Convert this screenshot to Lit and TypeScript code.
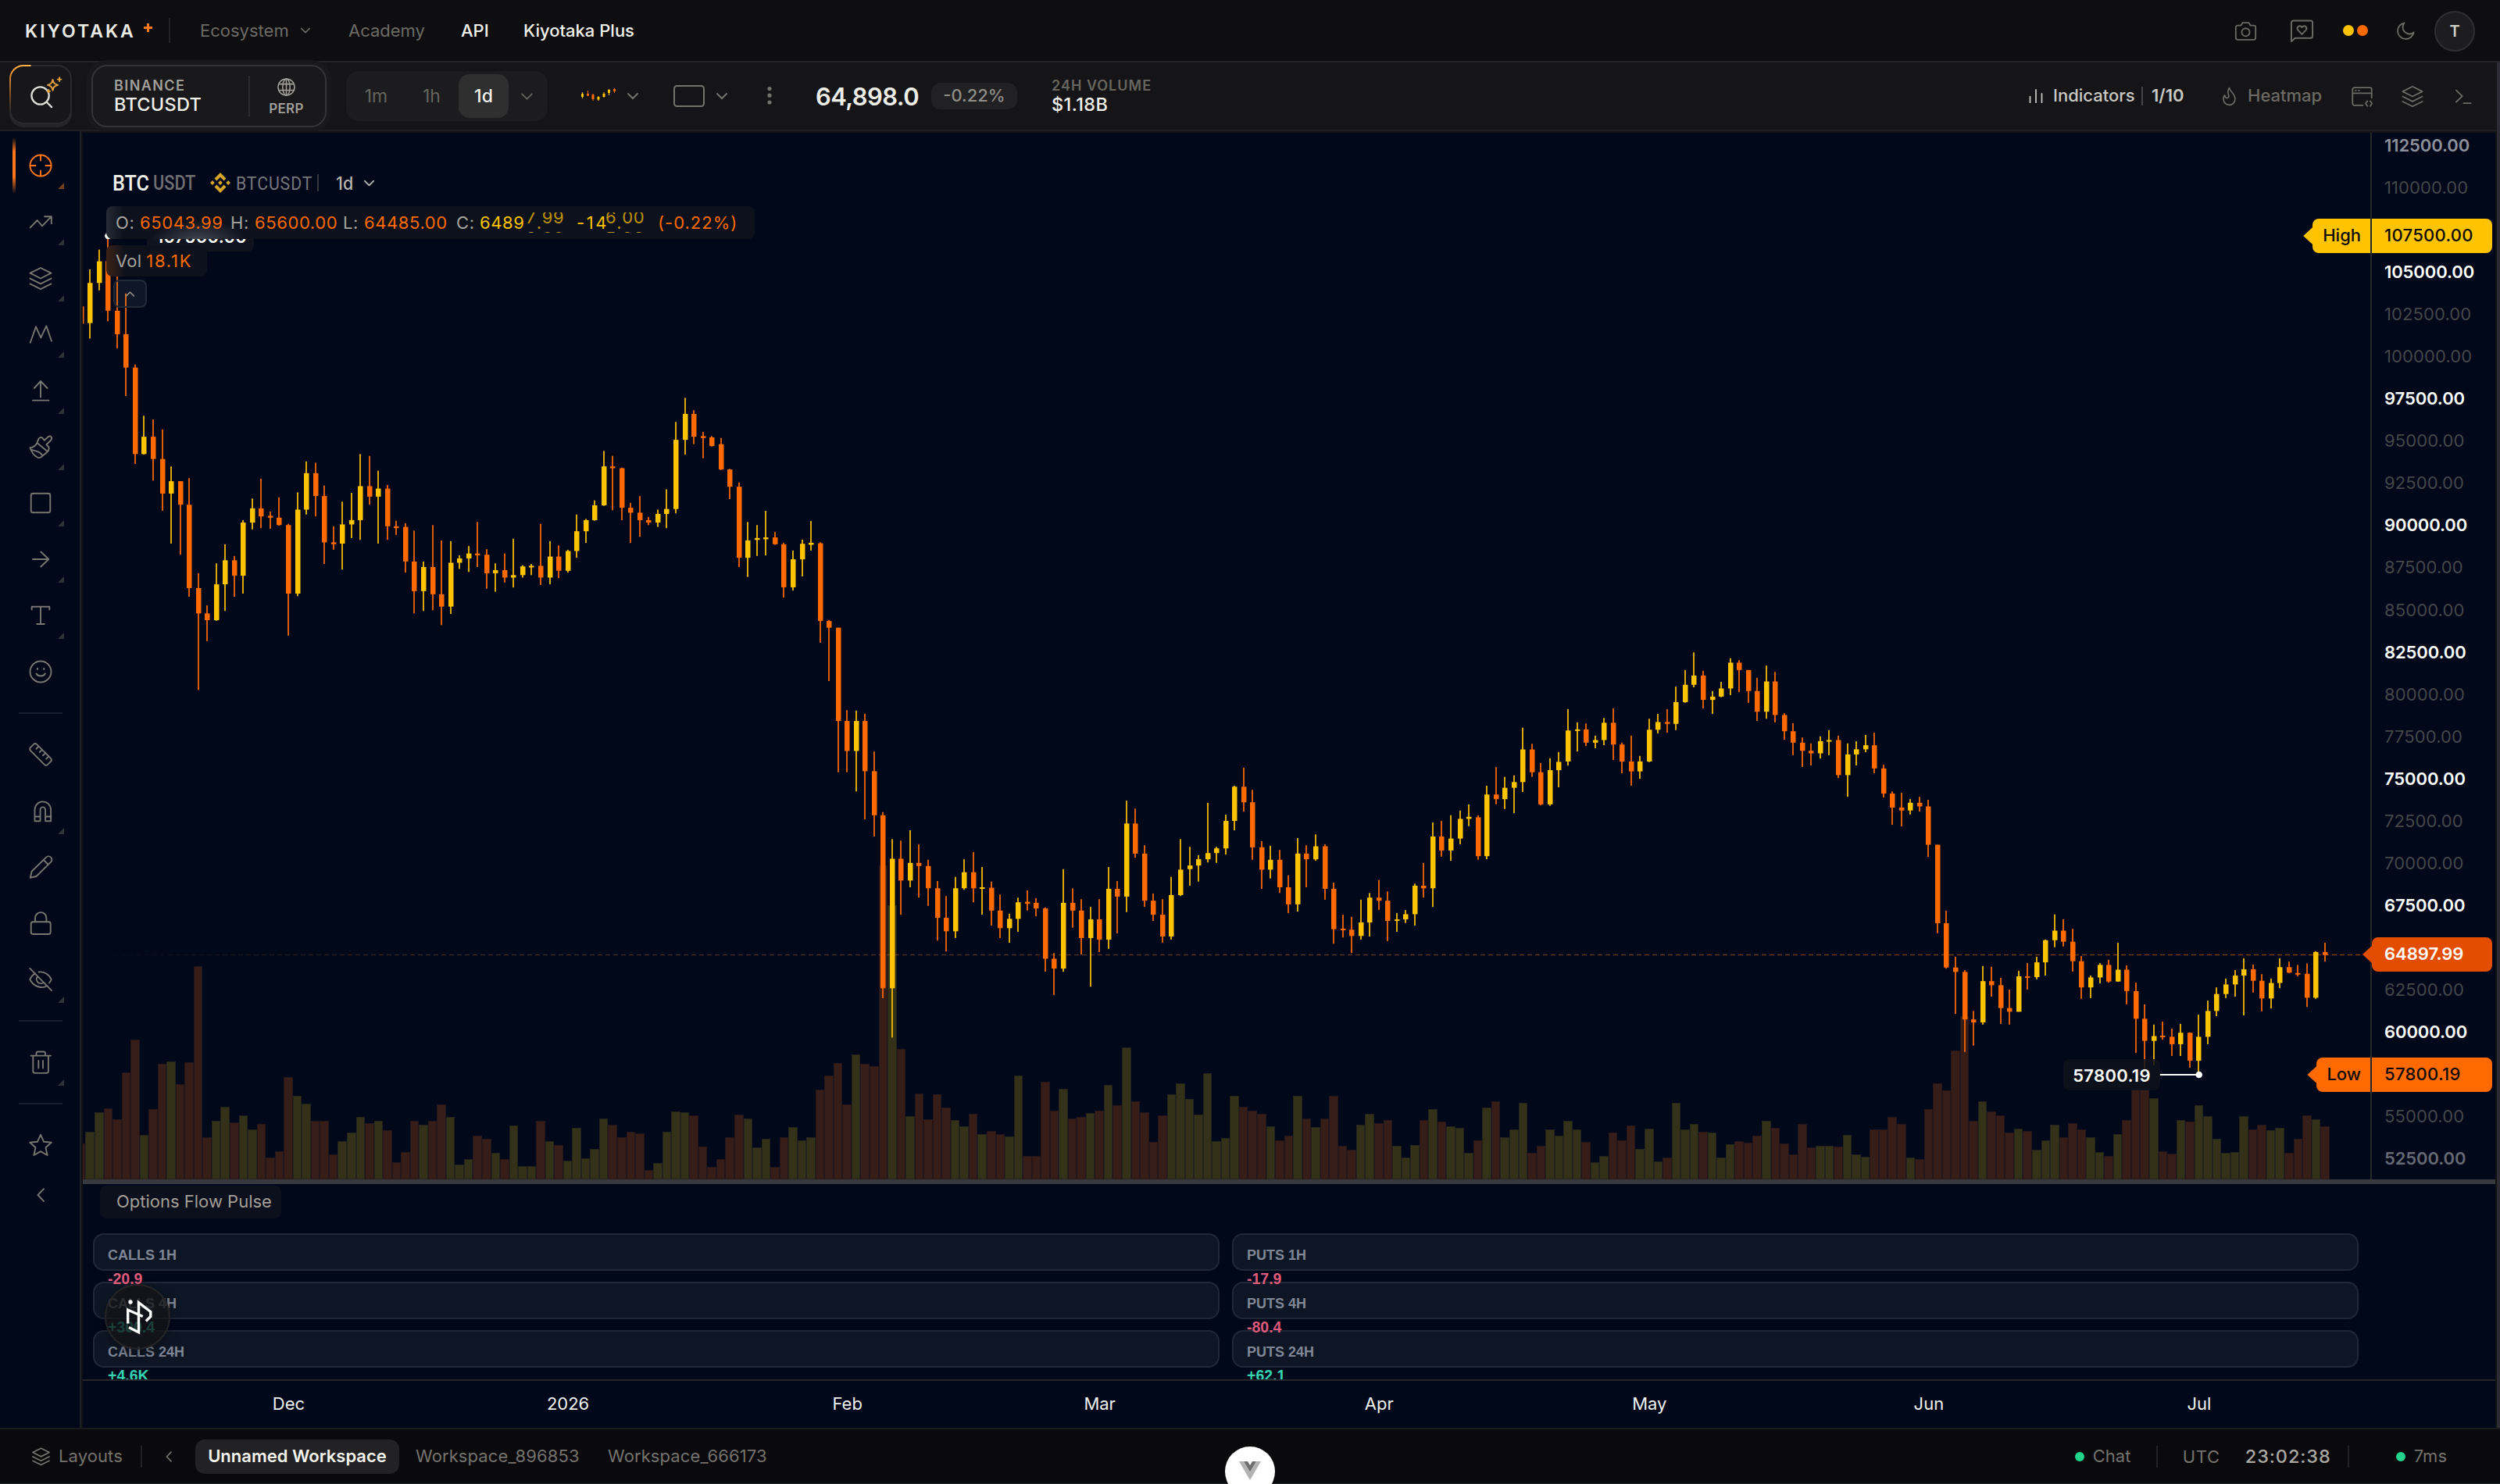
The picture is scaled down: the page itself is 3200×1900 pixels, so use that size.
import { LitElement, html, svg, css, nothing } from "lit";
import { customElement, property } from "lit/decorators.js";

/* ------------------------------------------------------------------ */
/* Icons                                                               */
/* ------------------------------------------------------------------ */

const ICONS: Record<string, unknown> = {
  crosshair: svg`<circle cx="16" cy="16" r="13.5"/><path d="M16 2.5v7M16 29.5v-7M2.5 16h7M29.5 16h-7"/>`,
  trend: svg`<path d="M2.7 23.3 11.7 14 18 21.3 29.5 9.4M21 9.2h8.8v9"/>`,
  layers: svg`<path d="M16 3 29.5 9.7 16 16.5 2.5 9.7ZM2.5 16.6 16 23.3l13.5-6.7M2.5 23.4 16 30.1l13.5-6.7"/>`,
  zigzag: svg`<path d="M2.7 26.7 10 6.3l6.3 14.1 7-15.1L30 24.7"/>`,
  up: svg`<path d="M16 4v20.5M7.8 13 16 4l8.5 9M6 28.6h20.5"/>`,
  brush: svg`<path d="M2.5 17.2c4.500-.3 7.200-2.600 9-6.200L25 22.300 16.800 29c-2 1.600-3.800 1.300-5.400.3C7.200 26.600 4.200 22.500 2.500 17.200ZM11.500 11l1.700-4.600c.9-2.500 3.600-3.300 5.400-1.300l2.200 2.700 4.500-4.200c3.600-2.600 6.500.8 3.700 4.200l-5.600 5.500 2.400 2.300c1.800 1.900 1.300 3.600-.8 6.700M4 19.700c5 2.300 11 1 14.500 7.800"/>`,
  square: svg`<rect x="3.700" y="3.700" width="24.600" height="24.600" rx="2.500"/>`,
  arrow: svg`<path d="M6 16h20M16.300 6.500 26.300 16l-10 9.500"/>`,
  text: svg`<path d="M4.700 8.500V4.800h22.600v3.700M16 4.800v22.200M11.200 27h9.600"/>`,
  smile: svg`<circle cx="16" cy="16" r="13.500"/><path d="M12 11.800v1.200M20.300 11.800v1.200M10.500 18.500c2 4 9.300 4 11.300 0"/>`,
  ruler: svg`<g transform="rotate(45 16 16)"><rect x="0.500" y="10.300" width="31" height="11.400" rx="3"/><path d="M7 10.300v4.500M13 10.300v4.500M19 10.300v4.500M25 10.300v4.500"/></g>`,
  magnet: svg`<path d="M8.500 29.200V14.700a10.300 10.300 0 0 1 20.600 0v14.500h-7V14.700a3.300 3.300 0 0 0-6.600 0v14.500ZM8.500 23.500h7M22.100 23.500h7"/>`,
  pencil: svg`<path d="m2.800 29.800 1.800-8L23 3.600a4.300 4.300 0 0 1 6.100 6.100L10.500 28ZM19.800 7l6 6"/>`,
  lock: svg`<rect x="3.700" y="14.300" width="25" height="15.700" rx="2.500"/><path d="M9 14.300V9.300a7.200 7.200 0 0 1 14.400 0v5"/>`,
  eyeOff: svg`<path d="M2.300 1.900 30 30.100M9 8C6 10 3.500 13 2.300 16 7 25.500 18 28.500 24.300 24M13.500 6.500C20.500 5.600 27 9.500 29.700 16c-.6 1.700-1.500 3.200-2.600 4.400M12 12.300a5.400 5.400 0 0 0 7.600 7.600"/>`,
  trash: svg`<path d="M3.500 7.600H29M10.500 7.600V4.800a2.300 2.300 0 0 1 2.300-2.300h6.900A2.300 2.300 0 0 1 22 4.800v2.800M6.300 7.600v20a2.300 2.300 0 0 0 2.300 2.300h15a2.300 2.300 0 0 0 2.300-2.300v-20M13.300 14v9.600M19 14v9.600"/>`,
  star: svg`<path d="m16 2.800 4.100 9 9.600 1-7.200 6.500 2.100 9.700L16 24.100 7.400 29l2.100-9.700-7.200-6.500 9.600-1Z"/>`,
  chevLeft: svg`<path d="M20 8.200 12.500 16l7.500 7.800"/>`,
  chevDown: svg`<path d="m4 10 12 12 12-12"/>`,
  chevUp: svg`<path d="m4 22 12-12 12 12"/>`,
  search: svg`<circle cx="14" cy="14" r="11.500"/><path d="m22.500 22.500 6.500 6.500"/>`,
  sparkle: svg`<path d="M13 6c1.600 7 3 8.500 10 10.500-7 2-8.400 3.500-10 10.500-1.600-7-3-8.500-10-10.500C10 14.500 11.400 13 13 6ZM26 2v7M22.500 5.500h7M5 26v5M2.500 28.500h5"/>`,
  globe: svg`<circle cx="16" cy="16" r="13.500"/><ellipse cx="16" cy="16" rx="6" ry="13.500"/><path d="M3.500 11h25M3.500 21h25M16 2.500v27"/>`,
  camera: svg`<path d="M4.500 8.500h4.700l2.500-4h8.600l2.500 4h4.700a2.500 2.500 0 0 1 2.500 2.500v15a2.500 2.500 0 0 1-2.500 2.500h-23A2.500 2.500 0 0 1 2 26V11a2.500 2.500 0 0 1 2.500-2.500Z"/><circle cx="16" cy="18" r="5.600"/>`,
  message: svg`<path d="M2 30V5a2.500 2.500 0 0 1 2.500-2.500h23A2.500 2.500 0 0 1 30 5v18a2.500 2.500 0 0 1-2.500 2.500H7Z"/><path d="m16 20.500-5.200-5.400c-2.300-2.800.3-6.400 3.300-5.300.9.300 1.500.9 1.900 1.600.4-.7 1-1.300 1.900-1.600 3-1.100 5.600 2.500 3.300 5.300Z"/>`,
  moon: svg`<path d="M13.500 3A13.300 13.300 0 1 0 29 18.500 11 11 0 0 1 13.500 3Z"/>`,
  bars: svg`<path d="M4 17v12M16 3v26M28 11v18"/>`,
  flame: svg`<path d="M16 2c1 6 9.500 9.500 9.500 18A9.700 9.700 0 0 1 16 30a9.700 9.700 0 0 1-9.700-9.700c0-3 1-5 2.200-6.300.6 3.200 1.700 4.500 3.500 4.500 3.500 0 3.700-3 2.500-6C13 8.500 14 5 16 2Z"/>`,
  panel: svg`<path d="M17 28.500H5A2.500 2.500 0 0 1 2.500 26V6A2.500 2.500 0 0 1 5 3.500h22A2.500 2.500 0 0 1 29.500 6v12M2.500 11.500h27M6.500 7.500h1M11 7.500h1M23.500 22.500 21 26l2.500 3.500M27.500 22.500 30 26l-2.500 3.500"/>`,
  prompt: svg`<path d="m5 6 10 9.500L5 25M17 27h12"/>`,
};

function icon(name: string, size: number, weight = 2) {
  return html`<svg
    class="icon"
    width=${size}
    height=${size}
    viewBox="0 0 32 32"
    fill="none"
    stroke="currentColor"
    stroke-width=${weight}
    stroke-linecap="round"
    stroke-linejoin="round"
  >
    ${ICONS[name]}
  </svg>`;
}

/* ------------------------------------------------------------------ */
/* Candle series                                                       */
/* ------------------------------------------------------------------ */

/**
 * The series comes in three blocks. Each row is
 * "direction high bodyTop bodyBottom low volumeTop" in block units, and each
 * block has its own origin and scale to turn these into chart pixels.
 */
const BLOCKS = [
  {
    origin: 280,
    scale: 1.2645,
    rows: `d142 142 170 170 1497|u82 104 169 194 1478|u50 69 104 116 1447|d30 69 149 166 1440|d80 149 187 210 1458|d121 187 241 287 1382|d236 241 381 397 1329|u319 353 381 382 1483|d325 353 389 424 1441|d341 389 445 473 1368|u401 425 445 526 1365|d425 425 463 544 1401|d420 463 598 612 1366|d574 598 639 763 1210|d626 639 650 684 1487|u558 592 650 651 1461|u527 553 592 635 1438|d546 553 578 612 1463|u488 492 578 607 1452|u453 469 492 503 1475|d421 469 482 501 1466|d474 481 484 502 1520|d451 484 496 497 1510|d494 496 607 675 1390|u443 471 607 611 1420|u393 412 471 479 1433|d395 412 449 482 1461|d432 449 524 559 1461|d498 524 527 536 1515|u458 495 526 568 1493|u444 488 495 517 1480|u381 433 488 520 1454|d384 433 450 463 1464|u408 437 450 526 1460|d431 437 498 520 1476|d489 498 501 512 1528|d493 499 555 573 1511|d505 555 603 639 1461|u555 564 603 635 1467|d496 564 608 634 1461|d521 608 628 658 1434|u522 557 628 640 1454|u545 550 557 567 1531|u530 542 550 572 1522|d491 542 545 564 1485|d535 544 574 599 1489|u558 569 574 604 1512|d542 569 581 589 1522|u518 577 581 597 1468|u561 563 577 581 1534|u559 562 564 577 1534|d494 562 581 593 1461|u522 547 581 592 1493|d529 547 570 582 1500|u536 538 570 573 1525|u479 506 538 549 1472|u486 488 506 525 1521|u456 464 488 489 1506|u376 401 464 465 1457|d384 401 404 472 1467|d403 404 468 488 1487|d460 468 476 525 1478|d449 476 488 515 1481|d483 488 492 496 1540|u471 478 492 499 1529|u438 470 478 501 1478|u329 358 470 477 1445|u290 316 358 382 1447|d310 316 353 365 1452|d345 352 355 388 1502|d352 354 368 369 1535|d355 365 406 407 1522|d405 406 434 454 1487|d427 434 549 564 1450|u491 521 549 580 1457|u496 517 520 546 1504|u473 516 519 545 1489|d507 516 527 528 1535`,
  },
  {
    origin: 480,
    scale: 1.5077,
    rows: `d324 327 410 430 1471|u339 356 410 416 1452|u318 326 356 389 1478|u282 324 328 339 1472|d323 325 475 517 1380|d473 475 488 591 1352|d488 488 668 767 1328|d647 668 726 767 1408|u648 668 726 804 1312|d654 668 765 858 1330|d727 765 850 891 1334|d844 850 1184 1203 947|u896 934 1184 1279 1024|d899 934 976 1042 1301|u879 942 976 989 1431|d906 942 948 1009 1387|d936 948 991 1025 1437|d977 991 1048 1092 1389|d1006 1048 1074 1113 1414|u969 991 1074 1087 1438|u935 960 991 994 1450|d921 960 991 1018 1426|u950 989 992 1042 1465|d978 990 1034 1063 1459|d1003 1034 1068 1087 1465|u1040 1050 1068 1096 1470|u1009 1018 1050 1075 1352|d995 1017 1021 1034 1508|d1010 1019 1030 1045 1507|d1028 1030 1127 1152 1364|d1116 1127 1146 1197 1421|u954 1019 1146 1152 1378|d991 1019 1034 1067 1435|d1012 1034 1087 1119 1432|u1027 1051 1087 1181 1425|d1012 1051 1090 1114 1420|u950 992 1090 1108 1370|d977 992 1007 1078 1409|u822 866 1007 1037 1298|d837 866 924 932 1402|d908 924 1015 1027 1424|d1001 1015 1042 1054 1481|d1012 1042 1084 1096 1430|u969 1004 1084 1090 1388|u896 955 1004 1006 1367|u911 947 954 986 1398|u927 935 947 978 1428|u826 923 935 941 1348|u911 914 923 942 1479|u849 861 914 926 1473|u793 795 861 879 1391|d758 795 825 843 1413|d801 825 912 936 1420|d900 912 955 992 1426|u909 936 955 972 1450|d917 936 989 1000 1477|d966 989 1022 1039 1468|u894 924 1022 1036 1392|d908 924 935 989 1435|u887 910 935 938 1452|d906 910 992 1013 1435|d980 992 1070 1098 1392|d1042 1069 1072 1086 1488|d1046 1071 1083 1116 1496|u1013 1057 1083 1090 1448|u1000 1009 1057 1084 1427|d975 1009 1015 1033 1444|d997 1015 1054 1093 1438|u1039 1051 1054 1075 1488|u1033 1041 1051 1058 1511|u982 986 1041 1063 1486|d942 986 991 1009 1438|u864 891 991 1027 1417|d861 891 918 930 1441|u850 895 918 938 1450|u841 857 895 906 1454|u829 853 857 871 1502|d850 854 929 936 1477|u793 810 929 935 1414|d757 810 819 829 1402|u776 797 819 838 1471|u773 786 797 846 1456|u681 723 786 805 1405|d712 723 767 776 1501|d749 767 829 831 1488|u740 763 829 832 1456|u728 747 763 796 1468`,
  },
  {
    origin: 780,
    scale: 2.119,
    rows: `u271 329 413 424 1389|u307 326 330 386 1411|d310 326 362 371 1445|u343 355 362 377 1501|u295 308 355 369 1483|d269 308 367 409 1419|d362 367 413 445 1441|d343 413 440 479 1401|u398 413 440 460 1464|u297 327 413 415 1409|u284 306 327 337 1498|d271 306 311 335 1488|u210 252 311 328 1339|u165 205 252 254 1411|u117 180 205 212 1396|d167 180 246 269 1418|u222 237 246 284 1419|u197 215 237 239 1487|u133 145 215 233 1451|d138 145 165 225 1443|d165 165 222 254 1448|d186 222 278 303 1428|u153 196 278 297 1389|d170 196 287 307 1408|d282 287 331 354 1450|d309 331 362 396 1480|d348 362 384 428 1397|d364 384 391 424 1459|u345 358 391 405 1456|u328 355 359 396 1456|d343 355 450 458 1457|u364 394 450 509 1427|u358 380 394 424 1480|u341 369 380 388 1486|d335 369 432 445 1411|d422 432 500 511 1412|d494 500 538 585 1377|d498 538 546 589 1397|u515 525 546 557 1487|d509 525 535 549 1492|d517 535 639 672 1356|d639 639 852 879 1286|d818 852 972 975 1305|d943 972 984 1098 1197|d979 984 1113 1201 1105|d1090 1113 1121 1184 1389|u968 1009 1121 1127 1334|d970 1009 1020 1051 1362|d1000 1020 1082 1125 1374|d1032 1082 1092 1127 1420|u981 996 1092 1092 1409|d960 996 999 1032 1416|u943 958 998 1004 1467|u896 898 958 994 1441|u828 872 898 917 1398|d841 872 902 915 1433|d867 902 955 983 1395|d941 955 1026 1057 1412|u994 999 1026 1055 1433|u960 965 999 1015 1472|d951 965 1010 1013 1484|u905 978 1010 1011 1425|d966 978 1036 1072 1386|d1013 1036 1111 1204 1301|d1072 1111 1171 1247 1303|u1127 1158 1171 1237 1327|d1119 1157 1161 1168 1471|d1138 1160 1180 1212 1476|u1125 1149 1180 1212 1386|d1148 1149 1225 1244 1390|u1100 1160 1225 1262 1346|u1062 1090 1160 1180 1376|u1026 1044 1090 1104 1436|u1002 1018 1044 1055 1474|u979 994 1018 1051 1473|u947 977 994 1102 1375|d964 977 1008 1040 1412|d990 1008 1056 1091 1398|u1002 1014 1056 1083 1414|u947 971 1014 1028 1406|d956 971 986 987 1475|d965 987 991 996 1437|d961 989 1054 1079 1374|u928 930 1054 1057 1383|d905 930 938 956 1402`,
  },
];

interface Candle {
  up: boolean;
  high: number;
  top: number;
  bottom: number;
  low: number;
  volume: number;
}

const CANDLES: Candle[] = BLOCKS.flatMap(({ origin, scale, rows }) =>
  rows.split("|").map((row) => {
    const [high, top, bottom, low, volume] = row
      .slice(1)
      .split(" ")
      .map((v) => origin + Number(v) / scale);
    return { up: row[0] === "u", high, top, bottom, low, volume };
  })
);

const FIRST_X = 103.7;
const STEP = 11.535;
const VOLUME_BASE = 1509;
const candleX = (i: number) => FIRST_X + i * STEP;

@customElement("candle-chart")
export class CandleChart extends LitElement {
  static styles = css`
    :host {
      display: block;
      width: 2929px;
      height: 1340px;
    }
    svg {
      display: block;
    }
    .up {
      fill: #ffc300;
    }
    .down {
      fill: #ff6a00;
    }
    .vol-up {
      fill: #333118;
      stroke: #22231a;
    }
    .vol-down {
      fill: #361d18;
      stroke: #24161a;
    }
    .mark {
      font: 600 22px Inter, "Liberation Sans", sans-serif;
      letter-spacing: 0.3px;
      fill: #fff;
    }
  `;

  render() {
    return html`<svg width="2929" height="1340" viewBox="105 170 2929 1340">
      <defs>
        <linearGradient id="fade" gradientUnits="userSpaceOnUse" x1="105" x2="3034" y1="0" y2="0">
          <stop offset="0" stop-color="#ff6a00" stop-opacity="0" />
          <stop offset="0.15" stop-color="#ff8a40" stop-opacity="0.22" />
          <stop offset="1" stop-color="#ff6a00" stop-opacity="0.5" />
        </linearGradient>
      </defs>
      ${CANDLES.map((c, i) => {
        const x = Math.round(candleX(i) - STEP / 2);
        const w = Math.round(candleX(i) + STEP / 2) - x;
        return svg`<rect class=${c.up ? "vol-up" : "vol-down"} stroke-width="1" x=${x + 0.5}
          y=${Math.round(c.volume) + 0.5} width=${w - 1} height=${VOLUME_BASE - Math.round(c.volume)}/>`;
      })}
      <path d="M105 1222.500H3034" stroke="url(#fade)" stroke-width="1.500" stroke-dasharray="6 4" />
      ${CANDLES.map((c, i) => {
        const x = Math.round(candleX(i));
        return svg`<g class=${c.up ? "up" : "down"}>
          <rect x=${x - 1} y=${c.high} width="2" height=${Math.max(c.low - c.high, 2)} opacity="0.85"/>
          <rect x=${x - 3} y=${c.top} width="6.500" height=${Math.max(c.bottom - c.top, 2)}/>
        </g>`;
      })}
      <path d="M138 302h50M2764 1376h50" stroke="#fff" stroke-width="2.200" />
      <circle cx="138.500" cy="302" r="4.300" fill="#fff" />
      <circle cx="2814.700" cy="1376" r="4.300" fill="#fff" />
      <rect x="188" y="282" width="137" height="40" rx="8" fill="#0f131d" />
      <text class="mark" x="258" y="310.500" text-anchor="middle">107500.00</text>
      <rect x="2641" y="1356" width="124" height="40" rx="8" fill="#0e121c" fill-opacity="0.85" />
      <text class="mark" x="2703" y="1384.500" text-anchor="middle">57800.19</text>
    </svg>`;
  }
}

/* ------------------------------------------------------------------ */
/* Digits mid-way through their roll animation; the point stays put    */
/* ------------------------------------------------------------------ */

@customElement("rolling-digits")
export class RollingDigits extends LitElement {
  @property() current = "";
  @property() next = "";

  static styles = css`
    :host {
      display: inline-flex;
      height: 26px;
      opacity: 0.72;
    }
    .point {
      line-height: 26px;
    }
    .wheel {
      display: flex;
      flex-direction: column;
      height: 26px;
      overflow: hidden;
    }
    .wheel span {
      height: 26.500px;
      line-height: 26.500px;
      flex: none;
    }
    .wheel span:first-child {
      margin-top: -7px;
    }
  `;

  render() {
    return [...this.current].map((ch, i) =>
      ch === "."
        ? html`<span class="point">.</span>`
        : html`<div class="wheel"><span>${ch}</span><span>${this.next[i]}</span></div>`
    );
  }
}

/* ------------------------------------------------------------------ */
/* Application shell                                                   */
/* ------------------------------------------------------------------ */

const TOOLS_TOP: [string, boolean][] = [
  ["crosshair", true],
  ["trend", true],
  ["layers", true],
  ["zigzag", true],
  ["up", true],
  ["brush", true],
  ["square", true],
  ["arrow", true],
  ["text", true],
  ["smile", false],
];

const TOOLS_EDIT: [string, boolean][] = [
  ["ruler", false],
  ["magnet", true],
  ["pencil", false],
  ["lock", false],
  ["eyeOff", true],
];

const MONTHS: [string, number][] = [
  ["Dec", 23],
  ["2026", 54],
  ["Feb", 85],
  ["Mar", 113],
  ["Apr", 144],
  ["May", 174],
  ["Jun", 205],
  ["Jul", 235],
];

const FLOW = [
  [
    ["CALLS 1H", "-20.9"],
    ["CALLS 4H", "+300.4"],
    ["CALLS 24H", "+4.6K"],
  ],
  [
    ["PUTS 1H", "-17.9"],
    ["PUTS 4H", "-80.4"],
    ["PUTS 24H", "+62.1"],
  ],
];

@customElement("app-root")
export class AppRoot extends LitElement {
  static styles = css`
    :host {
      display: block;
      width: 3200px;
      height: 1900px;
      overflow: hidden;
      background: #0a0a0c;
      font-family: Inter, "Liberation Sans", sans-serif;
      font-size: 22px;
      line-height: 28px;
      color: #6b6a65;
      white-space: nowrap;
    }
    * {
      box-sizing: border-box;
    }
    .icon {
      display: block;
      flex: none;
      overflow: visible;
    }
    .app {
      display: grid;
      grid-template-rows: 80px 88px 1660px 72px;
      height: 1900px;
      position: relative;
    }
    .row {
      display: flex;
      align-items: center;
    }
    .rule {
      width: 2px;
      flex: none;
      background: #222224;
    }

    /* header */
    .header {
      background: #0e0e10;
      border-bottom: 2px solid #232325;
      padding-left: 32px;
      padding-right: 32px;
    }
    .brand {
      width: 147px;
      font-size: 23px;
      font-weight: 600;
      letter-spacing: 3px;
      color: #ecebe6;
      padding-top: 2px;
    }
    .plus {
      width: 11px;
      height: 11px;
      margin: -7px 21px 0 5px;
      background: linear-gradient(#ff7a1a, #ff7a1a) center / 11px 3px no-repeat,
        linear-gradient(#ff7a1a, #ff7a1a) center / 3px 11px no-repeat;
    }
    .header .rule {
      height: 32px;
      margin-right: 38px;
    }
    .nav-eco {
      width: 128px;
    }
    .nav-academy {
      margin-left: 48px;
      width: 144px;
    }
    .nav-api {
      width: 80px;
    }
    .bright {
      color: #f2f1ec;
      font-weight: 500;
    }
    .push {
      margin-left: auto;
    }
    .themes {
      gap: 4px;
      margin-left: 37px;
      margin-right: 36px;
    }
    .themes i {
      width: 14px;
      height: 14px;
      border-radius: 50%;
      background: #ffc300;
    }
    .themes i + i {
      background: #ff6a00;
    }
    .avatar {
      width: 52px;
      height: 52px;
      margin-left: 24px;
      margin-top: 2px;
      border-radius: 50%;
      border: 2px solid #2f2f32;
      background: #1d1d1f;
      color: #cfcec9;
      font-size: 20px;
      font-weight: 600;
      justify-content: center;
    }

    /* toolbar */
    .toolbar {
      background: #151517;
      border-bottom: 2px solid #1e1e20;
      padding: 2px 24px 2px 12px;
      margin-right: 4px;
    }
    .search {
      position: relative;
      width: 80px;
      height: 80px;
      border-radius: 18px;
      background: #242426;
      flex: none;
    }
    .search-in {
      position: absolute;
      inset: 0 0 4px 0;
      border-radius: 18px;
      border: 2px solid transparent;
      background: linear-gradient(#171719, #171719) padding-box,
        conic-gradient(from 0deg at 42% 62%, #2a2a2c 0deg, #2a2a2c 250deg, #8a5226 290deg, #ffa640 330deg, #ffb350 352deg, #2a2a2c 353deg)
          border-box;
      color: #dddcd7;
    }
    .search-in .lens {
      position: absolute;
      left: 24px;
      top: 24px;
    }
    .search-in .spark {
      position: absolute;
      left: 45px;
      top: 13px;
      color: #e0a040;
    }
    .symbol {
      width: 301px;
      height: 80px;
      margin-left: 25px;
      border: 2px solid #343436;
      border-radius: 20px;
      background: #19191b;
      box-shadow: 0 0 0 6px #19191b;
      padding-left: 27px;
      flex: none;
    }
    .symbol-name {
      width: 172px;
      display: flex;
      flex-direction: column;
    }
    .venue {
      font-size: 18px;
      line-height: 22px;
      font-weight: 600;
      letter-spacing: 1.400px;
      color: #a09f9a;
    }
    .pair {
      font-size: 23.500px;
      line-height: 26px;
      font-weight: 500;
      letter-spacing: 0.3px;
      color: #f0efea;
    }
    .symbol .rule {
      height: 52px;
      background: #2b2b2d;
    }
    .perp {
      flex: 1;
      display: flex;
      flex-direction: column;
      align-items: center;
      gap: 4px;
      color: #a09f9a;
      font-size: 17px;
      line-height: 22px;
      font-weight: 600;
      letter-spacing: 0.3px;
      padding: 2px 3px 0 0;
    }
    .frames {
      height: 64px;
      width: 258px;
      margin-left: 25px;
      border-radius: 16px;
      background: #1c1c1e;
      font-size: 23px;
      flex: none;
      color: #65645f;
    }
    .frames span {
      text-align: center;
    }
    .frames span:first-child {
      width: 77px;
    }
    .frames span:nth-child(2) {
      width: 75px;
      padding-right: 10px;
    }
    .frames .on {
      width: 64px;
      height: 56px;
      line-height: 56px;
      border-radius: 14px;
      background: #2f2f30;
      color: #f2f1ec;
      font-weight: 500;
      margin-left: -8px;
      margin-right: 15px;
    }
    .last {
      width: 148px;
      margin-left: 43px;
      padding-top: 2px;
      font-size: 31px;
      font-weight: 600;
      letter-spacing: -0.6px;
      color: #eeede8;
    }
    .change {
      width: 110px;
      height: 34px;
      line-height: 33px;
      border-radius: 12px;
      background: #212123;
      color: #8f8e89;
      font-weight: 500;
      text-align: center;
    }
    .volume {
      margin-left: 44px;
      display: flex;
      flex-direction: column;
    }
    .volume .venue {
      color: #66655f;
      letter-spacing: 1px;
    }
    .volume .pair {
      letter-spacing: 0.4px;
      font-size: 23.500px;
    }

    /* middle */
    .body {
      display: grid;
      grid-template-columns: 106px 3088px;
      background: #121214;
      position: relative;
    }
    .scroll {
      position: absolute;
      right: 0;
      top: 80px;
      width: 4px;
      height: 1748px;
      background: #2c2b33;
    }
    .side {
      background: #00081a;
      width: 104px;
      border-right: 2px solid #1c2027;
      padding-top: 8px;
      color: #797671;
      display: flex;
      flex-direction: column;
    }
    .tool {
      position: relative;
      height: 72px;
      width: 104px;
      display: flex;
      align-items: center;
      justify-content: center;
      flex: none;
    }
    .tool.more::after {
      content: "";
      position: absolute;
      left: 74px;
      bottom: 6px;
      width: 8px;
      height: 8px;
      background: #2e323b;
      clip-path: polygon(100% 0, 100% 100%, 0 100%);
    }
    .tool.on {
      color: #ff7518;
    }
    .tool.on::before {
      content: "";
      position: absolute;
      left: 16px;
      top: 0;
      width: 4px;
      height: 72px;
      background: linear-gradient(transparent, #ff7518 25%, #ff7518 70%, transparent);
    }
    .tool.on::after {
      background: #73401f;
    }
    .sep {
      height: 2px;
      width: 56px;
      margin: 16px 0 16px 24px;
      background: #151d2e;
      flex: none;
    }
    .tool.small {
      height: 56px;
    }
    .main {
      display: grid;
      grid-template-rows: 1340px 6px 250px 60px;
      margin-top: 2px;
      background: #00081a;
    }
    .pane {
      display: grid;
      grid-template-columns: 2928px 160px;
      position: relative;
      overflow: hidden;
    }
    candle-chart {
      margin-left: -1px;
    }
    .axis {
      border-left: 2px solid #26282a;
      padding-left: 16px;
      margin-top: -11px;
      display: flex;
      flex-direction: column;
      font-size: 22px;
      color: #45464a;
      letter-spacing: 0.1px;
    }
    .axis span {
      height: 54.050px;
      line-height: 54.050px;
      flex: none;
    }
    .axis .major {
      color: #fff;
      font-weight: 600;
      letter-spacing: -0.1px;
    }
    .axis .edge {
      color: #8d909a;
    }
    .axis .edge.low {
      color: #666974;
    }
    .badge {
      position: absolute;
      right: 4px;
      display: flex;
      height: 44px;
      line-height: 42px;
      color: #0a0a0a;
      font-weight: 500;
      border-radius: 8px;
      background: var(--tone);
    }
    .badge::before {
      content: "";
      position: absolute;
      left: -12px;
      top: 10px;
      width: 13px;
      height: 24px;
      background: var(--tone);
      clip-path: polygon(0 50%, 100% 0, 100% 100%);
    }
    .badge b {
      font-weight: 500;
      padding: 0 12px 0 13px;
      border-right: 2px solid #26282a;
    }
    .badge span {
      width: 154px;
      padding-left: 16px;
      letter-spacing: 0.3px;
    }
    .high {
      --tone: #ffc300;
      top: 110px;
    }
    .low-badge {
      --tone: #ff6a00;
      top: 1184px;
    }
    .now {
      --tone: #e34d00;
      top: 1030px;
      color: #fff;
      font-weight: 600;
    }
    .now span {
      letter-spacing: 0;
    }

    .legend {
      position: absolute;
      left: 30px;
      top: 44px;
      display: flex;
      flex-direction: column;
      align-items: flex-start;
    }
    .title {
      height: 50px;
      padding: 0 0 10px 8px;
      font-family: Roboto, "Liberation Sans", sans-serif;
    }
    .title span {
      transform-origin: 0 50%;
      height: 32px;
      line-height: 34px;
    }
    .t-base {
      font-size: 28px;
      font-weight: 500;
      color: #f2f1ec;
      width: 52px;
      transform: scaleX(0.9);
    }
    .t-quote {
      font-size: 25px;
      font-weight: 500;
      width: 73px;
      transform: scaleX(0.87);
      color: #6f6e72;
    }
    .t-pair {
      font-size: 24.500px;
      width: 104px;
      margin-left: 7px;
      transform: scaleX(0.87);
      letter-spacing: 1px;
      color: #77767a;
    }
    .title .rule {
      height: 22px;
      background: #34363c;
      margin-right: 22px;
    }
    .t-frame {
      font-family: Inter, sans-serif;
      font-size: 23px;
      color: #b5b4af;
      font-weight: 500;
      width: 35px;
      transform: scaleX(0.93);
    }
    .title .chev {
      color: #b5b4af;
    }
    .ohlc {
      height: 42px;
      width: 830px;
      border-radius: 8px;
      background: radial-gradient(62px 26px at 118px 44px, rgba(190, 195, 205, 0.3), transparent),
        linear-gradient(90deg, rgba(190, 195, 205, 0.14), transparent 22px), #0c111c;
      padding-left: 12px;
      color: #a5a49f;
      letter-spacing: 0.6px;
    }
    .ohlc .o {
      color: #ff6a00;
    }
    .ohlc .y {
      color: #ffc300;
    }
    .w31 {
      width: 31px;
    }
    .w30 {
      width: 30px;
    }
    .vol {
      margin-top: 8px;
      height: 40px;
      width: 129px;
      border-radius: 8px;
      background: linear-gradient(90deg, rgba(255, 106, 0, 0.2), transparent 26px), #0c111c;
      padding-left: 12px;
      gap: 6px;
      color: #a5a49f;
      letter-spacing: 0.2px;
    }
    .vol .o {
      color: #ff6a00;
      letter-spacing: 1.800px;
    }
    .fold {
      margin: 4px 0 0 9px;
      width: 43px;
      height: 36px;
      border-radius: 8px;
      border: 2px solid #222a38;
      background: rgba(255, 255, 255, 0.06);
      justify-content: center;
      color: #8a8983;
    }

    .split {
      background: #38383f;
    }
    .flow {
      position: relative;
      overflow: hidden;
      padding: 2px 175px 0 13px;
    }
    .flow-tag {
      width: 232px;
      height: 42px;
      line-height: 40px;
      margin-left: 9px;
      padding-left: 21px;
      border-radius: 8px;
      background: #0b101c;
      color: #a19f98;
    }
    .flow-grid {
      display: grid;
      grid-template-columns: 1fr 1fr;
      column-gap: 16px;
      margin-top: 19px;
      font-family: "Liberation Sans", Arial, sans-serif;
      font-weight: 700;
    }
    .flow-col {
      display: flex;
      flex-direction: column;
      gap: 14px;
    }
    .cell {
      height: 48px;
      border: 2px solid #1f2837;
      border-radius: 14px;
      background: #0e1625;
      padding: 15px 0 0 17px;
      display: flex;
      flex-direction: column;
      font-size: 18px;
      line-height: 22px;
      color: #7f8696;
    }
    .val {
      margin-top: 8px;
      font-size: 19.500px;
      line-height: 22px;
      color: #de5a7a;
      flex: none;
      position: relative;
    }
    .label {
      flex: none;
    }
    .val.pos {
      color: #35d3b0;
    }
    .months {
      border-top: 2px solid #26262a;
      position: relative;
      color: #f0f0f0;
    }
    .month {
      position: absolute;
      top: 15px;
      transform: translateX(-50%);
    }
    .orb {
      position: absolute;
      left: 134px;
      top: 1644px;
      width: 84px;
      height: 84px;
      border-radius: 50%;
      border: 2px solid #252527;
      background: rgba(20, 20, 22, 0.78);
      box-shadow: 0 4px 14px rgba(0, 0, 0, 0.4);
    }
    .orb svg {
      display: block;
      margin: -2px;
    }

    /* footer */
    .footer {
      background: #0a0a0c;
      border-top: 2px solid #1b1b1e;
      border-bottom: 1px solid #26262d;
      padding: 0 68px 0 40px;
      color: #73726d;
    }
    .footer .rule {
      height: 28px;
    }
    .layouts {
      width: 115px;
      padding-left: 10px;
      margin-top: -2px;
      letter-spacing: 0.1px;
    }
    .tab {
      height: 44px;
      line-height: 42px;
      border-radius: 12px;
      width: 261px;
      text-align: center;
      background: #222224;
      color: #f4f3ee;
      font-weight: 600;
    }
    .ws {
      width: 246px;
      padding-left: 21px;
      margin-top: -2px;
      letter-spacing: 0.1px;
    }
    .dot {
      width: 12px;
      height: 12px;
      border-radius: 50%;
      background: #22d38b;
      margin-right: 11px;
    }
    .clock {
      font-size: 23.500px;
      font-weight: 500;
      letter-spacing: 0.9px;
      color: #a8a7a2;
      width: 131px;
    }
    .utc {
      width: 80px;
      letter-spacing: 0.6px;
    }
    .lift {
      margin-top: -2px;
    }
    .pull {
      position: absolute;
      left: 1568px;
      top: 1852px;
      width: 64px;
      height: 64px;
      border-radius: 50%;
      background: #fff;
    }
    .pull svg {
      display: block;
      margin: 19px 18px;
    }
  `;

  private tool([name, more]: [string, boolean]) {
    const cls = `tool${more ? " more" : ""}${name === "crosshair" ? " on" : ""}`;
    return html`<div class=${cls}>${icon(name, 32, 1.9)}</div>`;
  }

  private header() {
    return html`<header class="header row">
      <div class="brand">KIYOTAKA</div>
      <div class="plus"></div>
      <div class="rule"></div>
      <span class="nav-eco">Ecosystem</span>
      ${icon("chevDown", 14, 3.6)}
      <span class="nav-academy">Academy</span>
      <span class="nav-api bright">API</span>
      <span class="bright">Kiyotaka Plus</span>
      <div class="row push">
        ${icon("camera", 29, 2)}
        <span style="width:42px"></span>
        ${icon("message", 31, 2)}
        <div class="themes row"><i></i><i></i></div>
        ${icon("moon", 25, 2.4)}
        <div class="avatar row">T</div>
      </div>
    </header>`;
  }

  private toolbar() {
    /* x, body top, body bottom, wick top, wick bottom, rising */
    const mini = [
      [745.5, 121, 125, 119, 127, 1],
      [752.5, 121, 123.5, 117, 124, 0],
      [759, 122, 128, 121, 130, 0],
      [766, 125, 128.5, 124, 130, 1],
      [773, 121, 125, 119, 126, 1],
      [779.5, 116, 120, 115, 123, 1],
      [786.5, 115, 118, 114, 120, 0],
    ];
    return html`<div class="toolbar row">
      <div class="search">
        <div class="search-in">
          <div class="lens">${icon("search", 31, 2.4)}</div>
          <div class="spark">${icon("sparkle", 21, 3)}</div>
        </div>
      </div>
      <div class="symbol row">
        <div class="symbol-name">
          <span class="venue">BINANCE</span>
          <span class="pair">BTCUSDT</span>
        </div>
        <div class="rule"></div>
        <div class="perp">${icon("globe", 25, 2)}<span>PERP</span></div>
      </div>
      <div class="frames row">
        <span>1m</span><span>1h</span><span class="on">1d</span>${icon("chevDown", 17, 3.4)}
      </div>
      <svg class="icon" width="120" height="40" viewBox="701 104 120 40" fill="none">
        ${mini.map(
          ([x, y, y2, w, w2, up]) =>
            svg`<g stroke=${up ? "#ffc300" : "#ff6a00"}><path d="M${x} ${y}V${y2}" stroke-width="3"/>
              <path d="M${x} ${w}V${w2}" stroke-width="1"/></g>`
        )}
        <path d="m804 121 6 6 6-6" stroke="#73726d" stroke-width="2" stroke-linecap="round" />
      </svg>
      <svg class="icon" width="180" height="40" viewBox="821 104 180 40" fill="none">
        <rect x="863" y="111" width="38" height="26" rx="3.500" stroke="#73726d" stroke-width="2" />
        <path d="m918 121 6 6 6-6" stroke="#73726d" stroke-width="2" stroke-linecap="round" />
        <g fill="#73726d">
          <circle cx="985" cy="114.500" r="2.600" />
          <circle cx="985" cy="123.200" r="2.600" />
          <circle cx="985" cy="132" r="2.600" />
        </g>
      </svg>
      <span class="last">64,898.0</span>
      <span class="change">-0.22%</span>
      <div class="volume">
        <span class="venue">24H VOLUME</span>
        <span class="pair">$1.18B</span>
      </div>
      <div class="row push">
        <span style="color:#c9c8c3">${icon("bars", 20, 2.8)}</span>
        <span class="lift" style="color:#c9c8c3;font-weight:500;width:125px;padding-left:12px">Indicators</span>
        <div class="rule" style="height:24px;background:#454547"></div>
        <span class="lift" style="color:#c9c8c3;font-weight:600;width:98px;padding-left:11px">1/10</span>
        ${icon("flame", 25, 2.2)}
        <span class="lift" style="width:143px;padding-left:11px;font-weight:500">Heatmap</span>
        ${icon("panel", 29, 2)}
        <span style="width:35px"></span>
        ${icon("layers", 30, 1.9)}
        <span style="width:37px"></span>
        ${icon("prompt", 25, 2.4)}
        <span style="width:7px"></span>
      </div>
    </div>`;
  }

  private legend() {
    return html`<div class="legend">
      <div class="title row">
        <span class="t-base">BTC</span>
        <span class="t-quote">USDT</span>
        <svg class="icon" width="26" height="26" viewBox="0 0 26 26" fill="#d6a429">
          <path
            d="M13 0 20.500 7.500 17.600 10.400 13 5.800 8.400 10.400 5.500 7.500ZM2.900 10.100 5.800 13 2.900 15.900 0 13ZM13 10.100 15.900 13 13 15.900 10.100 13ZM23.100 10.100 26 13 23.100 15.900 20.200 13ZM13 20.200 17.600 15.600 20.500 18.500 13 26 5.500 18.500 8.400 15.600Z"
          />
        </svg>
        <span class="t-pair">BTCUSDT</span>
        <div class="rule"></div>
        <span class="t-frame">1d</span>
        <div class="chev">${icon("chevDown", 15, 4)}</div>
      </div>
      <div class="ohlc row">
        <span class="w31">O:</span><span class="o" style="width:116px">65043.99</span>
        <span class="w31">H:</span><span class="o" style="width:113px">65600.00</span>
        <span style="width:27px">L:</span><span class="o" style="width:118px">64485.00</span>
        <span class="w30">C:</span><span class="y" style="width:59px">6489</span>
        <rolling-digits class="y" style="width:49px" current="7.99" next="8.00"></rolling-digits>
        <span style="width:16px"></span>
        <span class="y" style="width:37px;letter-spacing:2.600px">-14</span>
        <rolling-digits class="y" style="width:53px" current="6.00" next="5.98"></rolling-digits>
        <span class="o" style="margin-left:14px;letter-spacing:1px">(-0.22%)</span>
      </div>
      <div class="vol row">Vol <span class="o">18.1K</span></div>
      <div class="fold row">${icon("chevUp", 13, 4)}</div>
    </div>`;
  }

  private axis() {
    return Array.from({ length: 25 }, (_, i) => {
      const price = 112500 - i * 2500;
      const major = i % 3 === 0;
      const hidden = price === 107500 || price === 65000 || price === 57500;
      const edge = i === 0 ? " edge" : i === 24 ? " edge low" : "";
      return html`<span class="${major ? "major" : ""}${edge}">${hidden ? nothing : price.toFixed(2)}</span>`;
    });
  }

  render() {
    return html`<div class="app">
      ${this.header()} ${this.toolbar()}
      <div class="body">
        <aside class="side">
          ${TOOLS_TOP.map((t) => this.tool(t))}
          <div class="sep"></div>
          ${TOOLS_EDIT.map((t) => this.tool(t))}
          <div class="sep"></div>
          ${this.tool(["trash", true])}
          <div class="sep"></div>
          ${this.tool(["star", false])}
          <div class="tool small">${icon("chevLeft", 32, 1.9)}</div>
        </aside>
        <section class="main">
          <div class="pane">
            <candle-chart></candle-chart>
            <div class="axis">${this.axis()}</div>
            <div class="badge high"><b>High</b><span>107500.00</span></div>
            <div class="badge now"><span>64897.99</span></div>
            <div class="badge low-badge"><b>Low</b><span>57800.19</span></div>
            ${this.legend()}
          </div>
          <div class="split"></div>
          <div class="flow">
            <div class="flow-tag">Options Flow Pulse</div>
            <div class="flow-grid">
              ${FLOW.map(
                (col) => html`<div class="flow-col">
                  ${col.map(
                    ([label, value]) => html`<div class="cell">
                      <span class="label">${label}</span>
                      <span class="val ${value[0] === "+" ? "pos" : ""}">${value}</span>
                    </div>`
                  )}
                </div>`
              )}
            </div>
          </div>
          <div class="months">
            ${MONTHS.map(
              ([name, i]) => html`<span class="month" style="left:${candleX(i) - 105.5}px">${name}</span>`
            )}
          </div>
        </section>
      </div>
      <footer class="footer row">
        ${icon("layers", 25, 2.2)}
        <span class="layouts">Layouts</span>
        <div class="rule"></div>
        <span style="width:22px"></span>
        ${icon("chevLeft", 24, 2.4)}
        <span style="width:22px"></span>
        <span class="tab">Unnamed Workspace</span>
        <span class="ws">Workspace_896853</span>
        <span class="ws">Workspace_666173</span>
        <div class="row push">
          <i class="dot"></i><span class="lift" style="width:81px">Chat</span>
          <div class="rule"></div>
          <span style="width:32px"></span>
          <span class="utc">UTC</span>
          <span class="clock">23:02:38</span>
          <div class="rule"></div>
          <span style="width:60px"></span>
          <i class="dot"></i><span class="lift">7ms</span>
        </div>
      </footer>
      <div class="scroll"></div>
      <div class="orb">
        <svg width="84" height="84" viewBox="134 1644 84 84" fill="none" stroke="#fff" stroke-width="3.400">
          <circle cx="167" cy="1667" r="2.700" fill="#fff" stroke="none" />
          <path
            d="M163.700 1694.500v-17.500l19 8.500M165 1699.500l12.500 6.200v-38l15.300 11.800v6l-6 6"
          />
        </svg>
      </div>
      <div class="pull">
        <svg width="28" height="24" viewBox="0 0 28 24">
          <path d="M0 0h6l8 13.500L22 0h6L14 24Z" fill="#b2b2b2" />
          <path d="M6 0h5l3 5 3-5h5l-8 13.500Z" fill="#6f6f6f" />
        </svg>
      </div>
    </div>`;
  }
}
